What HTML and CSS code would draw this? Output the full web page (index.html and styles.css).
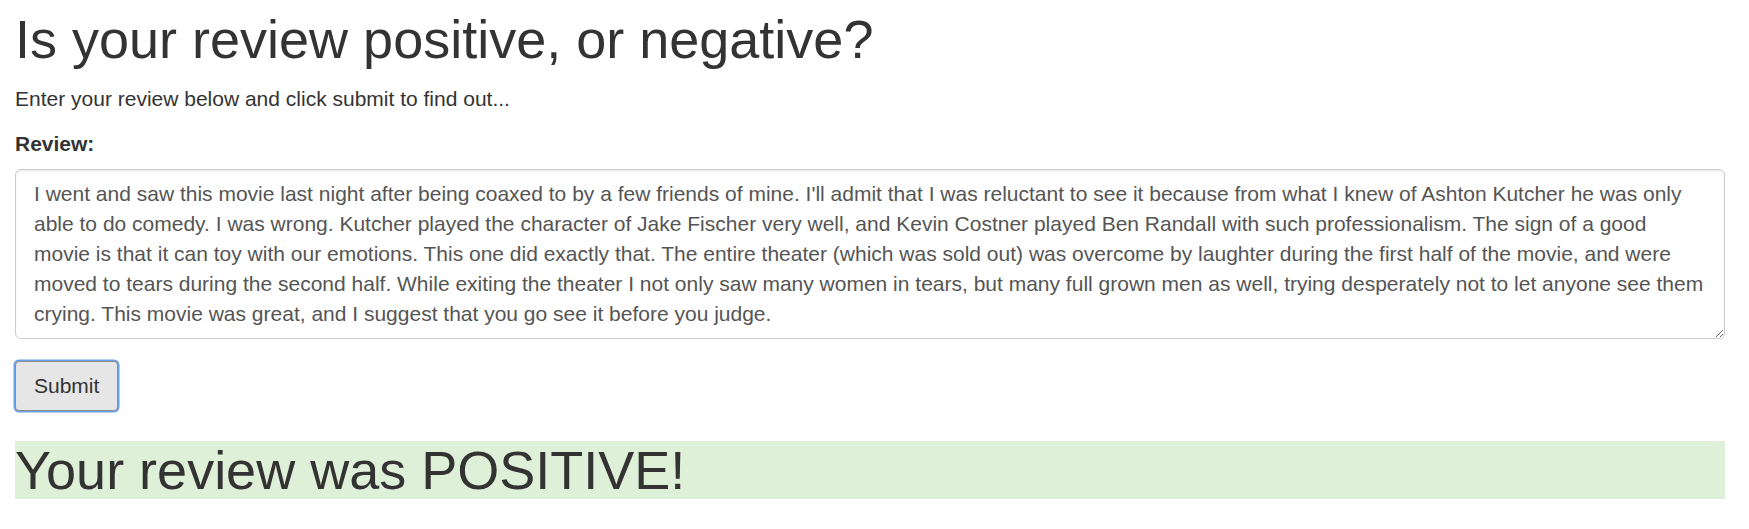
FILE: index.html
```html
<!DOCTYPE html>
<html lang="en">
<head>
<meta charset="utf-8">
<title>Sentiment</title>
<link rel="stylesheet" href="styles.css">
</head>
<body>
<div class="container">
  <h1 class="title">Is your review positive, or negative?</h1>
  <p class="lead-text">Enter your review below and click submit to find out...</p>
  <form class="review-form">
    <div class="form-group">
      <label class="review-label" for="review">Review:</label>
      <textarea id="review" class="form-control" rows="5" spellcheck="true">I went and saw this movie last night after being coaxed to by a few friends of mine. I'll admit that I was reluctant to see it because from what I knew of Ashton Kutcher he was only able to do comedy. I was wrong. Kutcher played the character of Jake Fischer very well, and Kevin Costner played Ben Randall with such professionalism. The sign of a good movie is that it can toy with our emotions. This one did exactly that. The entire theater (which was sold out) was overcome by laughter during the first half of the movie, and were moved to tears during the second half. While exiting the theater I not only saw many women in tears, but many full grown men as well, trying desperately not to let anyone see them crying. This movie was great, and I suggest that you go see it before you judge.</textarea>
    </div>
    <button type="button" class="btn">Submit</button>
  </form>
  <h1 class="result">Your review was POSITIVE!</h1>
</div>
</body>
</html>
```

FILE: styles.css
```css
html, body {
  margin: 0;
  padding: 0;
  background: #fff;
}
body {
  font-family: "Liberation Sans", Arial, sans-serif;
  font-size: 21px;
  line-height: 30px;
  color: #333;
}
.container {
  padding: 0 24px 0 15px;
}
.title {
  font-size: 54px;
  font-weight: normal;
  line-height: 1.1;
  margin: 10px 0 15px;
}
.lead-text {
  margin: 0 0 15px;
}
.review-form {
  margin: 0;
}
.form-group {
  margin-bottom: 22px;
}
.review-label {
  display: inline-block;
  font-weight: bold;
  margin-bottom: 10px;
}
.form-control {
  display: block;
  box-sizing: border-box;
  width: 100%;
  margin: 0;
  padding: 9px 18px;
  font-family: inherit;
  font-size: 21px;
  line-height: 30px;
  color: #555;
  background: #fff;
  border: 1.5px solid #ccc;
  border-radius: 6px;
  box-shadow: inset 0 1.5px 1.5px rgba(0,0,0,0.075);
  resize: vertical;
  outline: none;
}
.btn {
  display: inline-block;
  margin: 0;
  padding: 9px 18px;
  font-family: inherit;
  font-size: 21px;
  line-height: 30px;
  color: #333;
  background: #e6e6e6;
  border: 1.5px solid #8f8f8f;
  border-radius: 4px;
  box-shadow: 0 0 0 1.5px #6aa0ea;
  cursor: pointer;
}
.result {
  font-size: 54px;
  font-weight: normal;
  line-height: 58px;
  margin: 30px 0 0;
  background: #dff0d8;
}
```
